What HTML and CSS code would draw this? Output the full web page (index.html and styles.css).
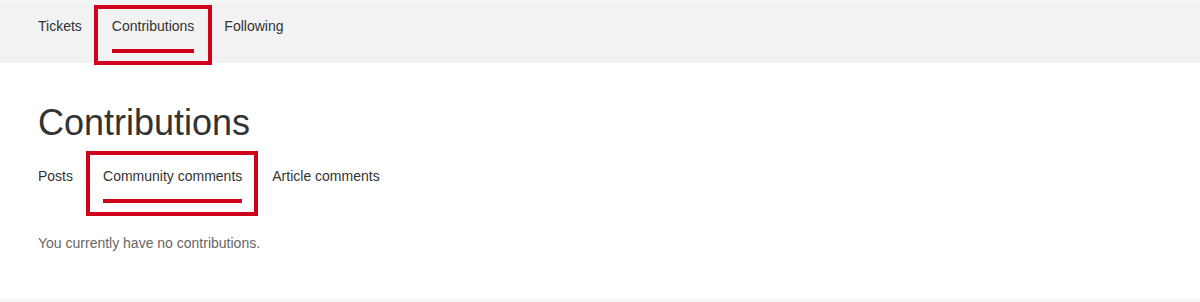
FILE: index.html
```html
<!DOCTYPE html>
<html lang="en">
<head>
<meta charset="utf-8">
<title>Contributions</title>
<link rel="stylesheet" href="styles.css">
</head>
<body>
<header class="topbar">
  <nav class="tabs">
    <a class="tab" href="#">Tickets</a>
    <a class="tab tab--active" href="#">Contributions<span class="mark mark--top"></span></a>
    <a class="tab" href="#">Following</a>
  </nav>
</header>
<main class="content">
  <h1 class="title">Contributions</h1>
  <nav class="tabs subtabs">
    <a class="tab" href="#">Posts</a>
    <a class="tab tab--active" href="#">Community comments<span class="mark mark--sub"></span></a>
    <a class="tab" href="#">Article comments</a>
  </nav>
  <p class="empty">You currently have no contributions.</p>
</main>
<footer class="footer"></footer>
</body>
</html>
```
FILE: styles.css
```css
html, body {
  margin: 0;
  padding: 0;
  background: #ffffff;
}
body {
  font-family: "Liberation Sans", Arial, sans-serif;
  font-size: 14px;
  line-height: 20px;
  color: #333333;
}
.topbar {
  border-top: 3px solid #f6f6f6;
  background: #f2f2f2;
  padding: 13px 38px 10px;
}
.tabs {
  display: flex;
  gap: 30px;
}
.tab {
  position: relative;
  display: block;
  color: #333333;
  text-decoration: none;
  padding-bottom: 17px;
}
.tab--active {
  padding-bottom: 13px;
  border-bottom: 4px solid #d0021b;
}
.mark {
  position: absolute;
  border: 4px solid #d0021b;
  pointer-events: none;
}
.mark--top {
  left: -18px;
  right: -18px;
  top: -11px;
  bottom: -16px;
}
.mark--sub {
  left: -17px;
  right: -16px;
  top: -15px;
  bottom: -17px;
}
.content {
  padding: 40px 38px 46px;
}
.title {
  margin: 0;
  font-size: 36px;
  line-height: 40px;
  font-weight: normal;
  color: #333333;
}
.subtabs {
  margin-top: 23px;
}
.empty {
  margin: 30px 0 0;
  color: #666666;
}
.footer {
  border-top: 3px solid #f7f7f7;
}
```
